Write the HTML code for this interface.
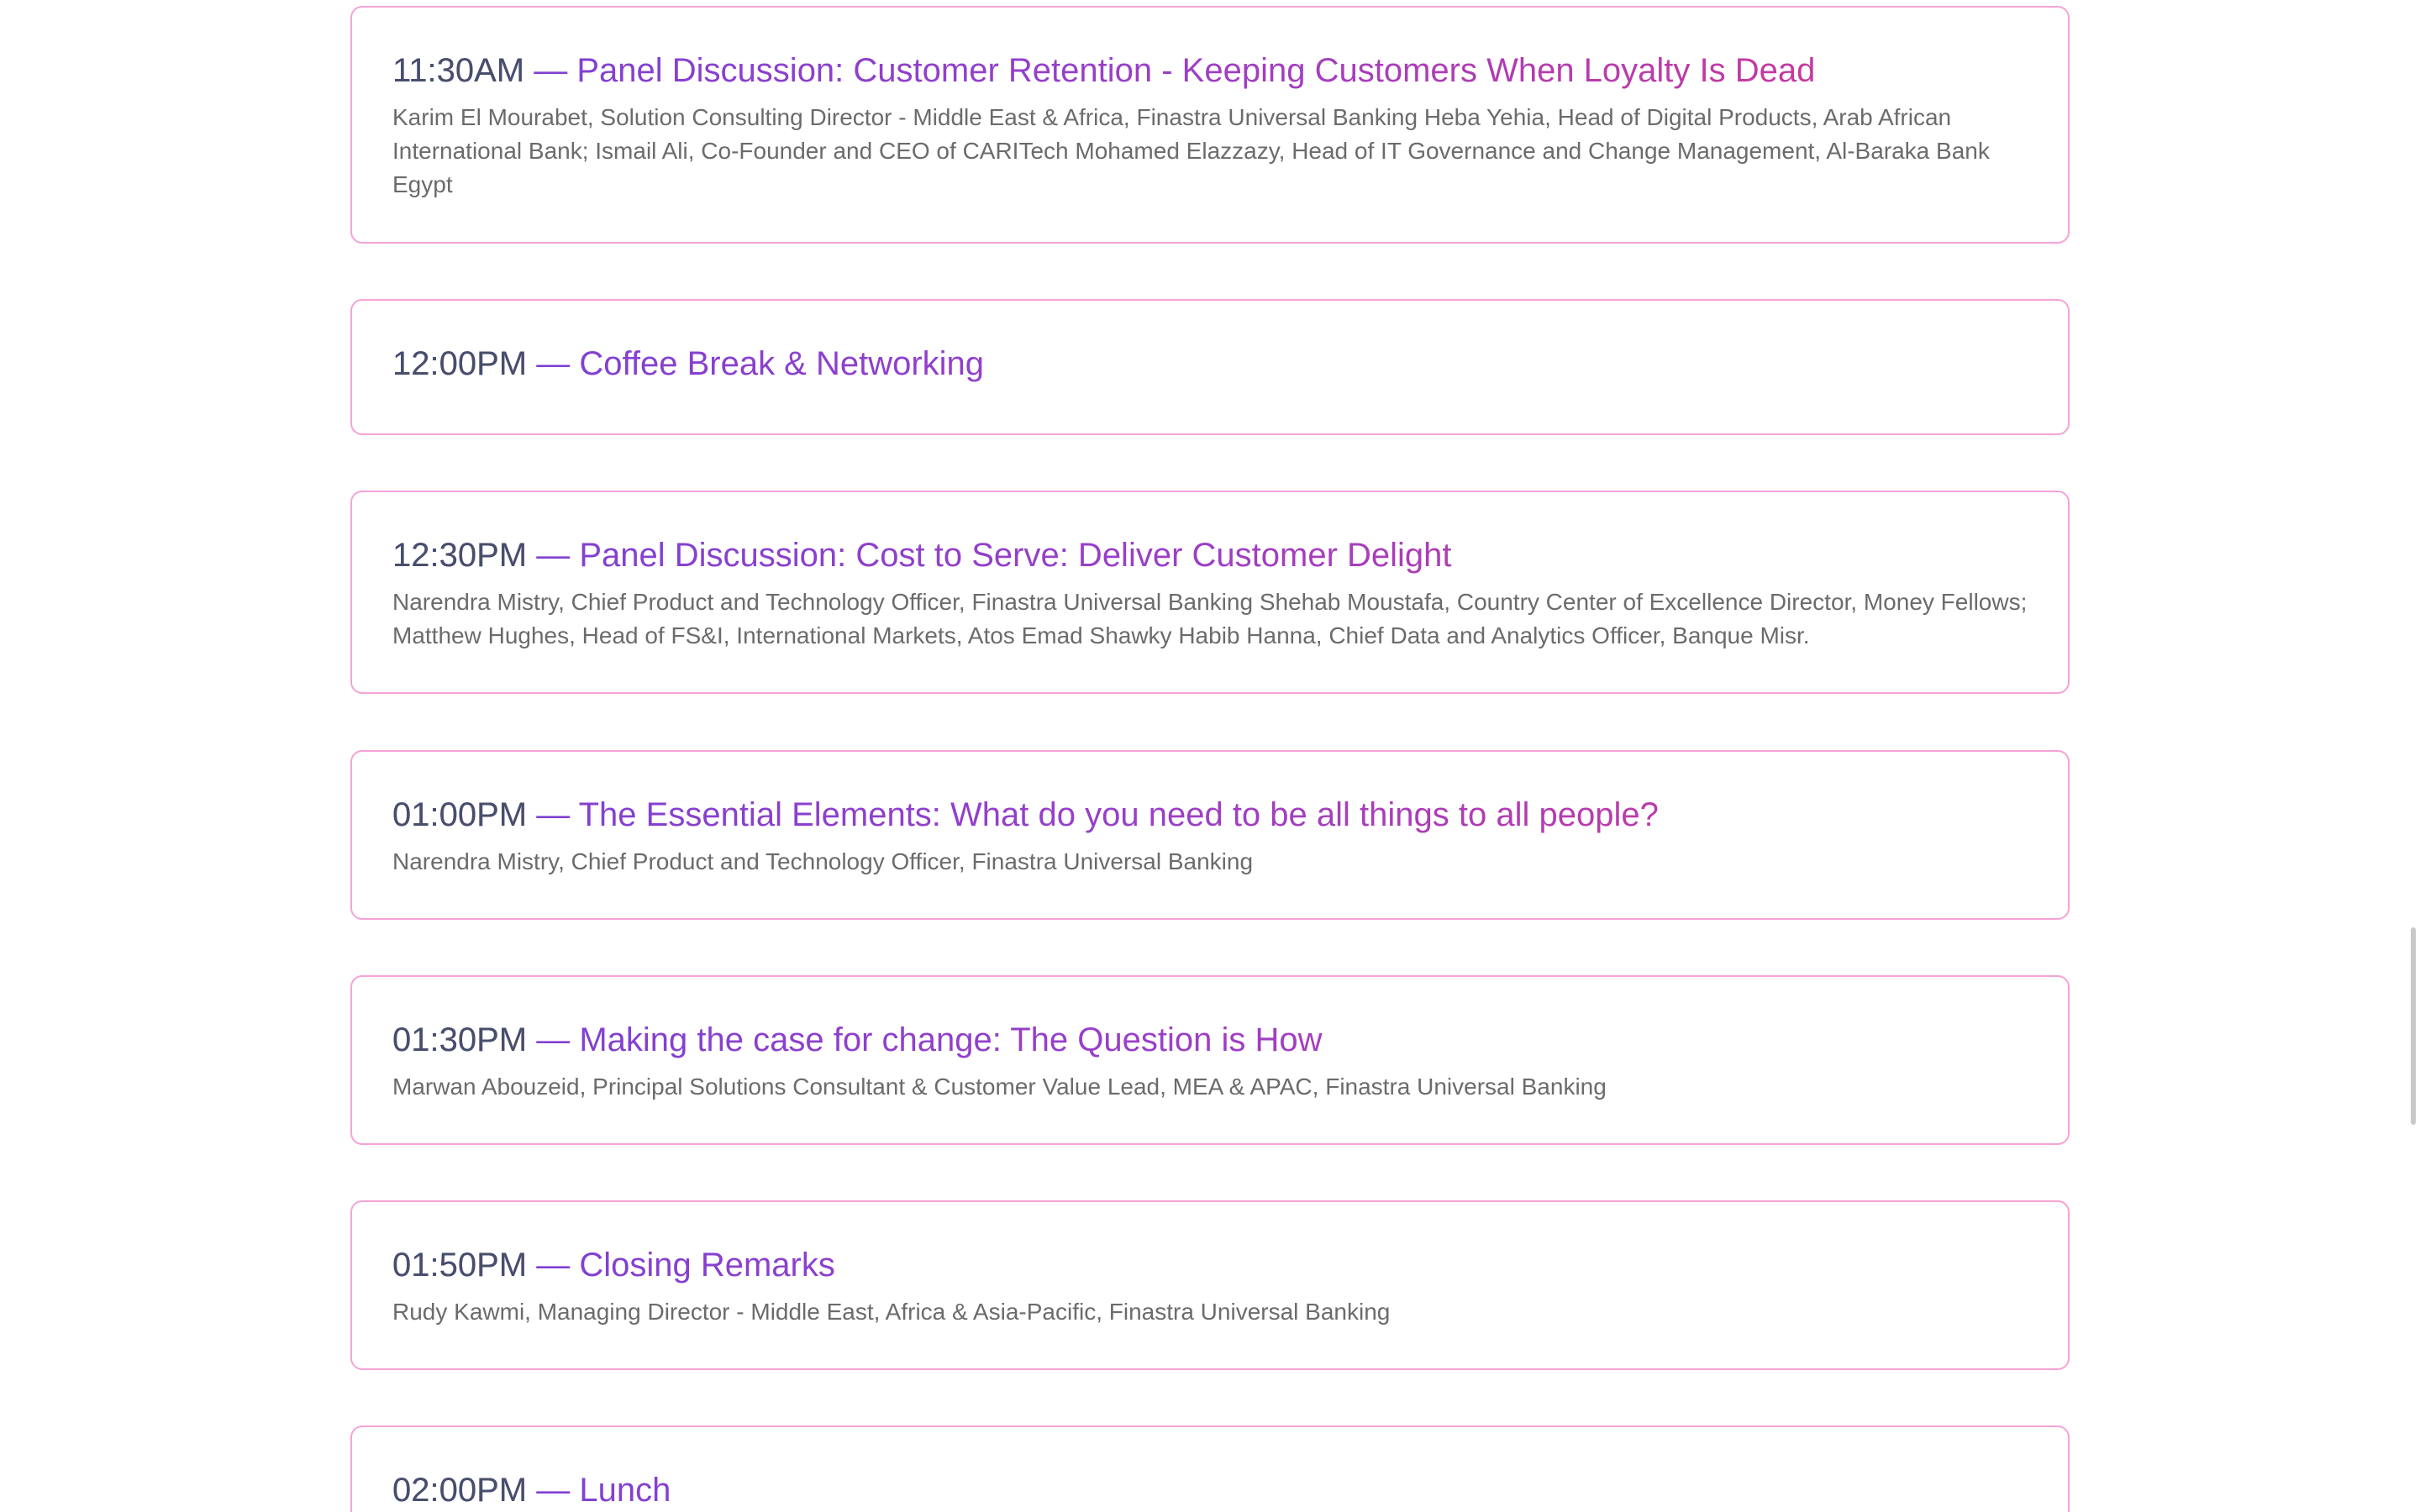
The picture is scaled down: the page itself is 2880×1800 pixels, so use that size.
<!DOCTYPE html>
<html><head><meta charset="utf-8"><style>
html,body{margin:0;padding:0;background:#fff;width:2880px;height:1800px;overflow:hidden;font-family:"Liberation Sans",Arial,sans-serif;}
#wrap{position:relative;width:2880px;height:1800px;overflow:hidden;}
.card{position:absolute;left:417px;width:2046px;box-sizing:border-box;border:2px solid #f5a3d6;border-radius:14px;padding:47px 36px 0 48px;background:#fff;}
h3{margin:0;font-weight:normal;font-size:40px;line-height:56px;white-space:nowrap;
background:linear-gradient(90deg,#7a40d4 0px,#9a3fc8 900px,#c73a9e 1720px,#c73a9e 2100px);-webkit-background-clip:text;background-clip:text;color:transparent;-webkit-text-fill-color:transparent;}
h3 .t{-webkit-text-fill-color:#474f6a;color:#474f6a;}
p{margin:8px 0 0;font-size:28px;line-height:40px;color:#6b6b6b;}
.sb{position:absolute;left:2869px;top:1104px;width:6px;height:235px;border-radius:3px;background:#c9c9c9;}
</style></head><body><div id="wrap">
<div class="card" style="top:7px;height:283px"><h3><span class="t">11:30AM </span>— Panel Discussion: Customer Retention - Keeping Customers When Loyalty Is Dead</h3>
<p>Karim El Mourabet, Solution Consulting Director - Middle East &amp; Africa, Finastra Universal Banking Heba Yehia, Head of Digital Products, Arab African International Bank; Ismail Ali, Co-Founder and CEO of CARITech Mohamed Elazzazy, Head of IT Governance and Change Management, Al-Baraka Bank Egypt</p></div>
<div class="card" style="top:356px;height:162px"><h3><span class="t">12:00PM </span>— Coffee Break &amp; Networking</h3></div>
<div class="card" style="top:584px;height:242px"><h3><span class="t">12:30PM </span>— Panel Discussion: Cost to Serve: Deliver Customer Delight</h3>
<p>Narendra Mistry, Chief Product and Technology Officer, Finastra Universal Banking Shehab Moustafa, Country Center of Excellence Director, Money Fellows; Matthew Hughes, Head of FS&amp;I, International Markets, Atos Emad Shawky Habib Hanna, Chief Data and Analytics Officer, Banque Misr.</p></div>
<div class="card" style="top:893px;height:202px"><h3><span class="t">01:00PM </span>— The Essential Elements: What do you need to be all things to all people?</h3>
<p>Narendra Mistry, Chief Product and Technology Officer, Finastra Universal Banking</p></div>
<div class="card" style="top:1161px;height:202px"><h3><span class="t">01:30PM </span>— Making the case for change: The Question is How</h3>
<p>Marwan Abouzeid, Principal Solutions Consultant &amp; Customer Value Lead, MEA &amp; APAC, Finastra Universal Banking</p></div>
<div class="card" style="top:1429px;height:202px"><h3><span class="t">01:50PM </span>— Closing Remarks</h3>
<p>Rudy Kawmi, Managing Director - Middle East, Africa &amp; Asia-Pacific, Finastra Universal Banking</p></div>
<div class="card" style="top:1697px;height:103px;border-bottom:none;border-radius:14px 14px 0 0"><h3><span class="t">02:00PM </span>— Lunch</h3></div>
<div class="sb"></div>
</div></body></html>
